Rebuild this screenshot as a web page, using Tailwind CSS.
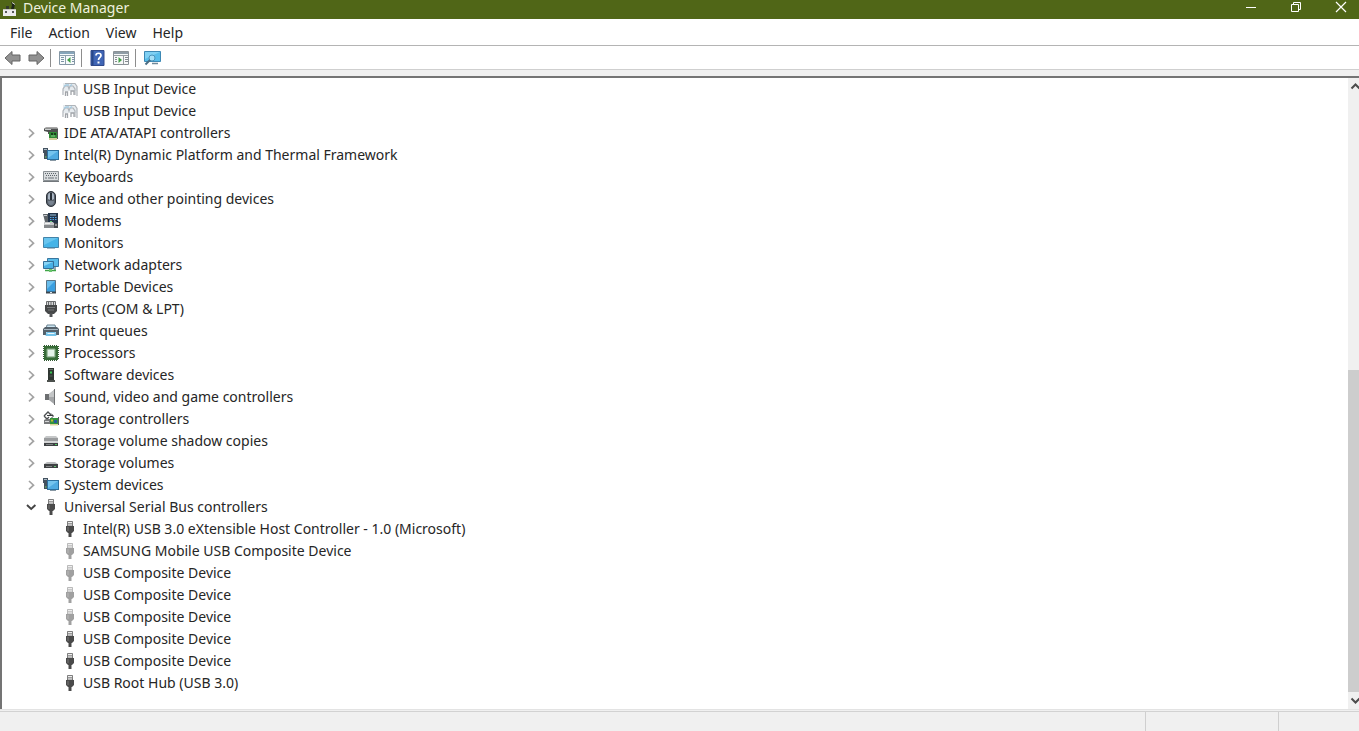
<!DOCTYPE html>
<html lang="en">
<head>
    <meta charset="UTF-8" />
    <meta name="viewport" content="width=device-width, initial-scale=1" />
    <title>Device Manager</title>
    <script src="https://cdn.jsdelivr.net/npm/@tailwindcss/browser@4"></script>
</head>
<body class="h-screen flex flex-col overflow-hidden bg-white text-[#262626] text-sm font-['Noto_Sans','Open_Sans',sans-serif]">

<!-- Icon set, all drawn on a 16x16 grid -->
<svg class="hidden" aria-hidden="true">
    <symbol id="chevron" viewBox="0 0 16 16"><path d="M6 4l4.500 4.200L6 12.400" fill="none" stroke="#a3a3a3" stroke-width="1.700"/></symbol>
    <symbol id="chevron-open" viewBox="0 0 16 16"><path d="m4 6 4.200 4 4.200-4" fill="none" stroke="#444" stroke-width="1.900"/></symbol>
    <symbol id="hid" viewBox="0 0 16 16">
        <path d="M1 2h11l3 4v4H1z" fill="#e6ebef"/>
        <path d="M1 14V8l2-3h3l1 3 1-3h3l2 3v6M3 2.500h10l2 3V15" fill="none" stroke="#afb4b9" stroke-width="1.200"/>
        <path d="M2 5.500 4 4h3M8 5l2-1.500" stroke="#a5cbe2" stroke-width="1.300" fill="none"/>
        <path d="M3.500 15v-4h2v4M9 14v-4h3v4" stroke="#a0a4a9" stroke-width="1.300" fill="none"/>
    </symbol>
    <symbol id="ide" viewBox="0 0 16 16">
        <path d="M1 3.500 3 2h11l1 1.500z" fill="#a8a8a8"/><path d="M1 3.500h14V9H5V7L1 6z" fill="#4d504f"/>
        <path d="M2 4.500h6" stroke="#c9cccc"/>
        <path d="M6 7h8v6H6z" fill="#2f8a35"/><path d="M8 8h2v2H8zM11 8h2v2h-2z" fill="#183f1b"/><path d="M8 11h4" stroke="#86c98a"/>
        <path d="M7 13v2M9 13v2M11 13v2M13 13v2" stroke="#a29b35"/><path d="M14.500 5v9" stroke="#555"/>
    </symbol>
    <symbol id="system" viewBox="0 0 16 16">
        <path d="M0 1h5v11H1V6H0z" fill="#44525f"/><path d="M1 2.500h3" stroke="#a9b9c6"/><path d="M2 10h1.500" stroke="#78d36b"/>
        <path d="M4 3h12v10H4z" fill="#2c6f9e"/><path d="M5 4h10v8H5z" fill="#4fabe2"/><path d="M5 4h10L5 11z" fill="#74c4ef"/>
        <path d="M7 13.500h6" stroke="#8797a3"/>
    </symbol>
    <symbol id="keyboard" viewBox="0 0 16 16">
        <path d="M.5 2.500h15v9H.5z" fill="#d9dcde" stroke="#8b9195"/>
        <path d="M2 4.500h12M3 6.500h12" stroke="#5d656b" stroke-dasharray="1 1"/><path d="M2 9h2M5 9h6M12 9h2" stroke="#6b7379"/><path d="M0 12.500h16" stroke="#72777b"/>
    </symbol>
    <symbol id="mouse" viewBox="0 0 16 16">
        <rect x="3.500" y=".5" width="9" height="15" rx="4.500" fill="#58606a" stroke="#2d333b"/>
        <path d="M5 8V5q0-3 2-3v7zM11 8V5q0-3-2-3v7z" fill="#aab6c4"/><path d="M5 10h6q0 4-3 4t-3-4" fill="#788391"/><path d="M8 2v7" stroke="#19202a" stroke-width="1.500"/>
    </symbol>
    <symbol id="modem" viewBox="0 0 16 16">
        <path d="M0 1h5v8H2z" fill="#5d6368"/><path d="M1 2.500h3" stroke="#c8ccd0"/>
        <path d="M5 0h10v10H5z" fill="#25364b"/><path d="M7 2h6" stroke="#9bc1dc"/>
        <path d="M7 4.500h7M7 6.500h7" stroke="#55a5e8" stroke-dasharray="1.500 1"/><path d="M7 8.500h2" stroke="#63c777"/>
        <path d="M1 9h9l2 3v3H1z" fill="#c6c8ca"/><path d="M1 12h10v3H1z" fill="#85888b"/><path d="M2 10.500h5" stroke="#f2f2f2"/>
        <path d="M11 10h4v5h-4z" fill="#45494c"/><path d="M12 12h2" stroke="#ddd"/>
    </symbol>
    <symbol id="monitor" viewBox="0 0 16 16"><path d="M.5 2.500h15v10H.5z" fill="#45b4e8" stroke="#4283a9"/><path d="M1 3h14L1 10z" fill="#68c5ef"/><path d="M4 13.500h8" stroke="#a6bbc8"/></symbol>
    <symbol id="network" viewBox="0 0 16 16">
        <path d="M4.500 1.500h11v8h-11z" fill="#58bce9" stroke="#38769f"/><path d="M.5 4.500h10v7H.5z" fill="#46b0e5" stroke="#356f97"/>
        <path d="M1 5h9l-9 4z" fill="#87d4f5"/><path d="M12 10v3" stroke="#708a99" stroke-width="1.500"/><path d="M2 13.500h11" stroke="#3fa447" stroke-width="1.500"/><path d="M6 12h3v3H6z" fill="#69c56d"/>
    </symbol>
    <symbol id="portable" viewBox="0 0 16 16"><path d="M3.500 1.500h9v12h-9z" fill="#3b9fe0" stroke="#5b7486"/><path d="M4 2h8l-8 8z" fill="#69bdec"/><path d="M3 13.500h10" stroke="#3d474f" stroke-width="2"/><path d="M7 13.500h2" stroke="#dce5ea"/></symbol>
    <symbol id="port" viewBox="0 0 16 16">
        <path d="M3.500.5h9V5h-9z" fill="#d7d8d9" stroke="#6b6d6f"/><path d="M5.500 1v3M8 1v3M10.500 1v3" stroke="#67696b"/>
        <path d="M2 4h12v6l-3 3H5l-3-3z" fill="#464849"/><path d="M4 6.500h8M5 9h6" stroke="#797b7d"/><path d="M6.500 12h3v4h-3z" fill="#505254"/>
    </symbol>
    <symbol id="printer" viewBox="0 0 16 16">
        <path d="M4 2h8l1 4H3z" fill="#cce6f3" stroke="#69808e"/><path d="M0 6l2-2h12l2 2v6h-3V9H3v3H0z" fill="#54616b"/>
        <path d="M1 6.500h14" stroke="#a6b5bf"/><path d="M3.500 9h9l1 4h-11z" fill="#73c2e8"/><path d="M4.500 10.500h7" stroke="#e7f6fd"/>
    </symbol>
    <symbol id="cpu" viewBox="0 0 16 16">
        <path d="M1 1h14v14H1z" fill="#366b36"/><path d="M.5 1v14M15.500 1v14M1 .5h14M1 15.500h14" stroke="#315b33" stroke-dasharray="1 1"/>
        <path d="M4 4h8v8H4z" fill="#c9e0cb" stroke="#82a884"/><path d="M5 5h6v6H5z" fill="#e4f3e9"/>
    </symbol>
    <symbol id="software" viewBox="0 0 16 16"><path d="M5 1h6v12H5z" fill="#2f3732"/><path d="M6 2.500h4" stroke="#68736b"/><path d="M7 5.500h2" stroke="#3bc653" stroke-width="2"/><path d="M6.500 9h3" stroke="#566059"/><path d="M4 13h8v2H4z" fill="#4b504d"/></symbol>
    <symbol id="sound" viewBox="0 0 16 16"><path d="M2 5h4v6H2z" fill="#6d6f71"/><path d="M6 5l5-4v14l-5-4z" fill="#a4a6a8"/><path d="M6 5l5-4v7H6z" fill="#c4c6c7"/><path d="M11.500 0v16" stroke="#707274"/></symbol>
    <symbol id="storage-ctl" viewBox="0 0 16 16">
        <path d="M1 5l4-4 3 3M1 5l3 3 2-2" fill="none" stroke="#4a4d4f" stroke-width="1.300"/><path d="M4 4.500h6M8 2.500l2.500 2.500L8 7.500" fill="none" stroke="#393c3e"/>
        <path d="M1 9l2-1h5v5H1z" fill="#77797b"/><path d="M2 10.500h4" stroke="#d5d6d7"/><path d="M7 7h8v6H7z" fill="#34933d"/><path d="M11 9h3v3h-3z" fill="#275a9a"/><path d="M8 9.500h2" stroke="#c4b937" stroke-width="2"/>
        <path d="M8 13v1.500M10 13v1.500M12 13v1.500M14 13v1.500" stroke="#bcae38"/><path d="M15.500 6v8" stroke="#5a5d5f"/>
    </symbol>
    <symbol id="shadow" viewBox="0 0 16 16"><path d="M3 3h10l2 2H1z" fill="#c5c7c8"/><path d="M1 5h14v3H1z" fill="#9a9c9e"/><path d="M1 8h14v2H1z" fill="#d4d5d6"/><path d="M1 10h14v3H1z" fill="#3e4143"/><path d="M3 11.500h7" stroke="#808385"/><path d="M12 11.500h2" stroke="#50cc63"/></symbol>
    <symbol id="volume" viewBox="0 0 16 16"><path d="M4 7h8l3 2H1z" fill="#b9bbbd"/><path d="M1 9h14v4H1z" fill="#3f4244"/><path d="M3 11.500h6" stroke="#858789"/><path d="M11 11.500h2" stroke="#66ca73"/></symbol>
    <symbol id="usb" viewBox="0 0 16 16">
        <path d="M5.500.5h5V5h-5z" fill="#eee" stroke="currentColor" stroke-opacity=".7"/><path d="M7 2v1.500M9 2v1.500" stroke="currentColor"/>
        <path d="M4 5h8v5l-2 2H6l-2-2z" fill="currentColor"/><path d="M6 6v4" stroke="#fff" stroke-opacity=".25"/><path d="M6.500 12h3v4h-3z" fill="currentColor"/>
    </symbol>
</svg>

<header class="flex h-[19px] shrink-0 items-center bg-[#506617] text-[#eef1df]">
    <svg class="ml-[2px] mr-[5px] size-4" viewBox="0 0 16 16">
        <path d="M1 7h13v7H1z" fill="#ecebed"/><path d="M1 7.500h13" stroke="#c5c6bd"/><path d="M3 9h2v2H3zM10 9h2v2h-2z" fill="#575a5a"/>
        <path d="M4 4h3v3H4z" fill="#343b2c"/><path d="M9 0l4 2-1 5H9l1-4z" fill="#1f261b"/><path d="M10 .5l3 2" stroke="#ced0c8"/>
    </svg>
    <h1 class="-mt-1 flex-1 leading-5">Device Manager</h1>
    <button aria-label="Minimize" class="-mt-1.5 w-[45px] flex justify-center"><svg class="size-3" viewBox="0 0 12 12"><path d="M1 6.500h10" stroke="#fff"/></svg></button>
    <button aria-label="Restore" class="-mt-1.5 w-[45px] flex justify-center"><svg class="size-3" viewBox="0 0 12 12"><path d="M1.500 3.500h7v7h-7zM3.500 3V1.500h7v7H9" fill="none" stroke="#fff"/></svg></button>
    <button aria-label="Close" class="-mt-1.5 w-[41px] pl-1 flex justify-center"><svg class="size-3" viewBox="0 0 12 12"><path d="m1 1 10 10M11 1 1 11" stroke="#fff" stroke-width="1.200"/></svg></button>
</header>

<nav class="flex h-[27px] shrink-0 items-center gap-4 border-b border-[#b4b4b4] pt-px pl-[10px]">
    <button>File</button>
    <button>Action</button>
    <button>View</button>
    <button>Help</button>
</nav>

<div class="flex h-6 shrink-0 items-center border-b border-[#cfcfcf] pt-px pl-1">
    <button aria-label="Back"><svg class="h-4 w-[17px]" viewBox="0 0 17 16"><path d="M1 8l7-6.500V5h8v6H8v3.500z" fill="#929292" stroke="#656565"/></svg></button>
    <button aria-label="Forward" class="ml-[7px]"><svg class="h-4 w-[17px]" viewBox="0 0 17 16"><path d="M16 8 9 1.500V5H1v6h8v3.500z" fill="#929292" stroke="#656565"/></svg></button>
    <span class="ml-[5px] h-[18px] w-px bg-[#8d8d8d]"></span>
    <button aria-label="Show/Hide Console Tree" class="ml-2"><svg class="size-4" viewBox="0 0 16 16"><path d="M.5 1.500h15v13H.5z" fill="#f7fafc" stroke="#8597a5"/><path d="M1 3h14" stroke="#86a5ba" stroke-width="2"/><path d="M1 5.500h14M6.500 6v8" stroke="#8ea0ad"/><path d="M2 7.500h3M2 9.500h3M2 11.500h3M13 7.500h2M13 9.500h2M13 11.500h2" stroke="#7d95a5"/><path d="M11.500 7v6L8 10z" fill="#43a047"/></svg></button>
    <span class="ml-[6px] h-[18px] w-px bg-[#8d8d8d]"></span>
    <button aria-label="Help" class="ml-2"><svg class="h-4 w-[15px]" viewBox="0 0 14 16"><path d="M.5.5h13v15H.5z" fill="#3f65b5" stroke="#30498a"/><path d="M1 1h2v14H1z" fill="#284788"/><path d="M5.500 5.500c0-3 5-3 5 0 0 2-2.500 2-2.500 4.500" fill="none" stroke="#fff" stroke-width="1.700"/><path d="M7 11.500h2v2H7z" fill="#fff"/></svg></button>
    <button aria-label="Show/Hide Action Pane" class="ml-2"><svg class="size-4" viewBox="0 0 16 16"><path d="M.5 1.500h15v13H.5z" fill="#f7f8f8" stroke="#8b9297"/><path d="M1 3h14" stroke="#8f9ca5" stroke-width="2"/><path d="M1 5.500h14M10.500 6v8" stroke="#969da2"/><path d="M12 7.500h3M12 9.500h3M12 11.500h3M2 7.500h2M2 9.500h2M2 11.500h2" stroke="#858b90"/><path d="M5.500 7v6L9 10z" fill="#43a047"/></svg></button>
    <span class="ml-[6px] h-[18px] w-px bg-[#8d8d8d]"></span>
    <button aria-label="Scan for hardware changes" class="ml-2"><svg class="h-4 w-[17px]" viewBox="0 0 17 16"><path d="M.5 1.500h16v10H.5z" fill="#58bdea" stroke="#3d88b4"/><path d="M1 2h15L1 9z" fill="#7fd0f3"/><circle cx="8" cy="8" r="3" fill="#a5dff7" stroke="#4b94bb"/><path d="m6 10-4.500 4.500" stroke="#4b6d82" stroke-width="2"/><path d="M8 13.500h6" stroke="#71899a" stroke-width="1.500"/></svg></button>
</div>

<main class="flex min-h-0 flex-1 flex-col bg-[#f0f0f0] pt-[6px]">
    <div class="flex min-h-0 flex-1 border-t-2 border-l-2 border-[#747474] bg-white">
        <ul class="min-w-0 flex-1 overflow-hidden whitespace-nowrap leading-[22px]">
            <li class="flex items-center pl-[60px]"><svg class="mr-[5px] size-4"><use href="#hid"/></svg>USB Input Device</li>
            <li class="flex items-center pl-[60px]"><svg class="mr-[5px] size-4"><use href="#hid"/></svg>USB Input Device</li>
            <li class="flex items-center pl-[21px]"><button aria-label="Expand" class="mr-1"><svg class="size-4"><use href="#chevron"/></svg></button><svg class="mr-[5px] size-4"><use href="#ide"/></svg>IDE ATA/ATAPI controllers</li>
            <li class="flex items-center pl-[21px]"><button aria-label="Expand" class="mr-1"><svg class="size-4"><use href="#chevron"/></svg></button><svg class="mr-[5px] size-4"><use href="#system"/></svg>Intel(R) Dynamic Platform and Thermal Framework</li>
            <li class="flex items-center pl-[21px]"><button aria-label="Expand" class="mr-1"><svg class="size-4"><use href="#chevron"/></svg></button><svg class="mr-[5px] size-4"><use href="#keyboard"/></svg>Keyboards</li>
            <li class="flex items-center pl-[21px]"><button aria-label="Expand" class="mr-1"><svg class="size-4"><use href="#chevron"/></svg></button><svg class="mr-[5px] size-4"><use href="#mouse"/></svg>Mice and other pointing devices</li>
            <li class="flex items-center pl-[21px]"><button aria-label="Expand" class="mr-1"><svg class="size-4"><use href="#chevron"/></svg></button><svg class="mr-[5px] size-4"><use href="#modem"/></svg>Modems</li>
            <li class="flex items-center pl-[21px]"><button aria-label="Expand" class="mr-1"><svg class="size-4"><use href="#chevron"/></svg></button><svg class="mr-[5px] size-4"><use href="#monitor"/></svg>Monitors</li>
            <li class="flex items-center pl-[21px]"><button aria-label="Expand" class="mr-1"><svg class="size-4"><use href="#chevron"/></svg></button><svg class="mr-[5px] size-4"><use href="#network"/></svg>Network adapters</li>
            <li class="flex items-center pl-[21px]"><button aria-label="Expand" class="mr-1"><svg class="size-4"><use href="#chevron"/></svg></button><svg class="mr-[5px] size-4"><use href="#portable"/></svg>Portable Devices</li>
            <li class="flex items-center pl-[21px]"><button aria-label="Expand" class="mr-1"><svg class="size-4"><use href="#chevron"/></svg></button><svg class="mr-[5px] size-4"><use href="#port"/></svg>Ports (COM &amp; LPT)</li>
            <li class="flex items-center pl-[21px]"><button aria-label="Expand" class="mr-1"><svg class="size-4"><use href="#chevron"/></svg></button><svg class="mr-[5px] size-4"><use href="#printer"/></svg>Print queues</li>
            <li class="flex items-center pl-[21px]"><button aria-label="Expand" class="mr-1"><svg class="size-4"><use href="#chevron"/></svg></button><svg class="mr-[5px] size-4"><use href="#cpu"/></svg>Processors</li>
            <li class="flex items-center pl-[21px]"><button aria-label="Expand" class="mr-1"><svg class="size-4"><use href="#chevron"/></svg></button><svg class="mr-[5px] size-4"><use href="#software"/></svg>Software devices</li>
            <li class="flex items-center pl-[21px]"><button aria-label="Expand" class="mr-1"><svg class="size-4"><use href="#chevron"/></svg></button><svg class="mr-[5px] size-4"><use href="#sound"/></svg>Sound, video and game controllers</li>
            <li class="flex items-center pl-[21px]"><button aria-label="Expand" class="mr-1"><svg class="size-4"><use href="#chevron"/></svg></button><svg class="mr-[5px] size-4"><use href="#storage-ctl"/></svg>Storage controllers</li>
            <li class="flex items-center pl-[21px]"><button aria-label="Expand" class="mr-1"><svg class="size-4"><use href="#chevron"/></svg></button><svg class="mr-[5px] size-4"><use href="#shadow"/></svg>Storage volume shadow copies</li>
            <li class="flex items-center pl-[21px]"><button aria-label="Expand" class="mr-1"><svg class="size-4"><use href="#chevron"/></svg></button><svg class="mr-[5px] size-4"><use href="#volume"/></svg>Storage volumes</li>
            <li class="flex items-center pl-[21px]"><button aria-label="Expand" class="mr-1"><svg class="size-4"><use href="#chevron"/></svg></button><svg class="mr-[5px] size-4"><use href="#system"/></svg>System devices</li>
            <li>
                <div class="flex items-center pl-[21px]"><button aria-label="Collapse" class="mr-1"><svg class="size-4"><use href="#chevron-open"/></svg></button><svg class="mr-[5px] size-4 text-[#4a4a4a]"><use href="#usb"/></svg>Universal Serial Bus controllers</div>
                <ul>
                    <li class="flex items-center pl-[60px]"><svg class="mr-[5px] size-4 text-[#4a4a4a]"><use href="#usb"/></svg>Intel(R) USB 3.0 eXtensible Host Controller - 1.0 (Microsoft)</li>
                    <li class="flex items-center pl-[60px]"><svg class="mr-[5px] size-4 text-[#a0a0a0]"><use href="#usb"/></svg>SAMSUNG Mobile USB Composite Device</li>
                    <li class="flex items-center pl-[60px]"><svg class="mr-[5px] size-4 text-[#a0a0a0]"><use href="#usb"/></svg>USB Composite Device</li>
                    <li class="flex items-center pl-[60px]"><svg class="mr-[5px] size-4 text-[#a0a0a0]"><use href="#usb"/></svg>USB Composite Device</li>
                    <li class="flex items-center pl-[60px]"><svg class="mr-[5px] size-4 text-[#a0a0a0]"><use href="#usb"/></svg>USB Composite Device</li>
                    <li class="flex items-center pl-[60px]"><svg class="mr-[5px] size-4 text-[#4a4a4a]"><use href="#usb"/></svg>USB Composite Device</li>
                    <li class="flex items-center pl-[60px]"><svg class="mr-[5px] size-4 text-[#4a4a4a]"><use href="#usb"/></svg>USB Composite Device</li>
                    <li class="flex items-center pl-[60px]"><svg class="mr-[5px] size-4 text-[#4a4a4a]"><use href="#usb"/></svg>USB Root Hub (USB 3.0)</li>
                </ul>
            </li>
        </ul>
        <!-- Scrollbar -->
        <div class="flex w-[11px] shrink-0 flex-col overflow-hidden bg-[#f0f0f0]">
            <button aria-label="Scroll up" class="h-[17px]"><svg class="h-[17px] w-[15px]" viewBox="0 0 15 17"><path d="m3.500 10.500 4-4 4 4" fill="none" stroke="#4c4c4c" stroke-width="2"/></svg></button>
            <div class="flex-[275]"></div>
            <div class="flex-[322] bg-[#cdcdcd]"></div>
            <button aria-label="Scroll down" class="h-[17px]"><svg class="h-[17px] w-[15px]" viewBox="0 0 15 17"><path d="m3.500 6.500 4 4 4-4" fill="none" stroke="#4c4c4c" stroke-width="2"/></svg></button>
        </div>
    </div>
</main>

<footer class="flex h-[22px] shrink-0 border-t border-[#e3e3e3] bg-[#f0f0f0]">
    <div class="mt-px flex flex-1 border-t border-[#d2d2d2]">
        <div class="flex-1"></div>
        <div class="w-[133px] border-l border-[#cfcfcf]"></div>
        <div class="w-[81px] border-l border-[#cfcfcf]"></div>
    </div>
</footer>
</body>
</html>
